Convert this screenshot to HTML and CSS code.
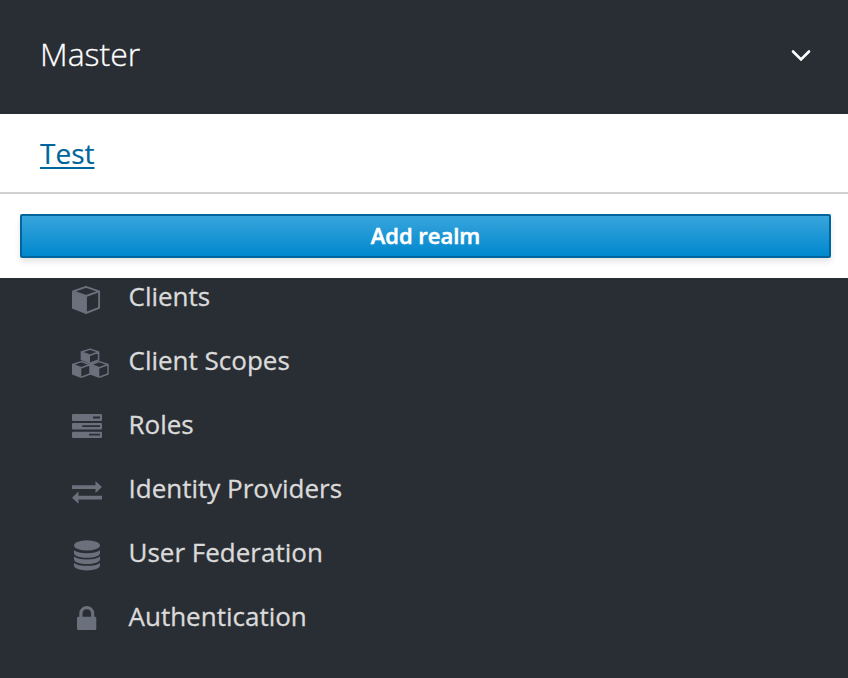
FILE: index.html
```
<!DOCTYPE html>
<html lang="en">
<head>
<meta charset="utf-8">
<title>Realm menu</title>
<link rel="stylesheet" href="styles.css">
</head>
<body>
<header class="realm">
  <h2 class="realm-name">Master</h2>
  <svg class="chevron" width="20" height="14" viewBox="0 0 20 14"><path d="M2 2.5 10 10.5 18 2.5"/></svg>
</header>
<section class="dropdown">
  <div class="realm-option"><a href="#">Test</a></div>
  <div class="add-realm"><button type="button">Add realm</button></div>
</section>
<nav>
  <ul class="menu">
    <li><svg class="icon" viewBox="0 0 40 40"><path d="M2 12.8 16 17.5V35L2 29.5Z"/><path class="line" d="M16 7.8 3 12.4 16 17 29.1 12.4ZM16 17 29.1 12.4V28.8L16 34Z"/></svg><span>Clients</span></li>
    <li><svg class="icon" viewBox="0 0 40 40"><path d="M10.7 9 20 12.3V20.7L10.7 17ZM2 21.6 11.3 25V35L2 31.4ZM20 21.6 29.3 25V35L20 31.4Z"/><path class="line thin" d="M20 6.1 11.4 9 20 12.2 28.6 9ZM20 12.2 28.6 9V17L20 20.3M11.3 18.6 2.7 21.5 11.3 24.7 20 21.5ZM11.3 24.7 20 21.5V31L11.3 34.3M29.3 18.6 20.7 21.5 29.3 24.7 38 21.5ZM29.3 24.7 38 21.5V31L29.3 34.3"/></svg><span>Client Scopes</span></li>
    <li><svg class="icon" viewBox="0 0 40 40"><path fill-rule="evenodd" d="M3 7H31Q32 7 32 8V13Q32 14 31 14H3Q2 14 2 13V8Q2 7 3 7ZM23 9.6V11.4H30V9.6ZM3 16H31Q32 16 32 17V21.4Q32 22.4 31 22.4H3Q2 22.4 2 21.4V17Q2 16 3 16ZM12.3 18.3V20.1H30V18.3ZM3 24.7H31Q32 24.7 32 25.7V30Q32 31 31 31H3Q2 31 2 30V25.7Q2 24.7 3 24.7ZM19 26.8V28.6H30V26.8Z"/></svg><span>Roles</span></li>
    <li><svg class="icon" viewBox="0 0 40 40"><path d="M2 14.2H25.5V10L32 16 25.5 22V18H2ZM32 24.8H8.5V20.6L2 26.7 8.5 32.8V28.6H32Z"/></svg><span>Identity Providers</span></li>
    <li><svg class="icon" viewBox="0 0 40 40"><ellipse cx="17" cy="10.4" rx="13" ry="5.2"/><path d="M4 15.3C6.5 17.3 11 18.2 17 18.2S27.5 17.3 30 15.3V18C30 20.7 24.2 22.8 17 22.8S4 20.7 4 18ZM4 21.6C6.5 23.6 11 24.5 17 24.5S27.5 23.6 30 21.6V24.3C30 27 24.2 29.1 17 29.1S4 27 4 24.3ZM4 27.9C6.5 29.9 11 30.8 17 30.8S27.5 29.9 30 27.9V30.6C30 33.3 24.2 35.4 17 35.4S4 33.3 4 30.6Z"/></svg><span>User Federation</span></li>
    <li><svg class="icon" viewBox="0 0 40 40"><rect x="7" y="17.7" width="19.3" height="13.3" rx="1.3"/><path class="line shackle" d="M10.9 18.5V14.8C10.9 6.6 22.7 6.6 22.7 14.8V18.5"/></svg><span>Authentication</span></li>
  </ul>
</nav>
</body>
</html>
```
FILE: styles.css
```
* { box-sizing: border-box; }
body {
  margin: 0;
  height: 678px;
  overflow: hidden;
  background: #292e34;
  font-family: "Open Sans", sans-serif;
}
.realm {
  display: flex;
  align-items: center;
  justify-content: space-between;
  height: 114px;
  padding: 0 37px 6px 40px;
  color: #fff;
}
.realm-name {
  margin: 0;
  font-size: 32px;
  font-weight: 300;
  line-height: 44px;
  -webkit-text-stroke: .3px;
}
.chevron {
  fill: none;
  stroke: #fff;
  stroke-width: 2.6;
  stroke-linecap: round;
  margin-top: 3px;
}
.dropdown { height: 164px; background: #fff; }
.realm-option {
  height: 80px;
  padding: 19px 40px;
  border-bottom: 2px solid #d1d1d1;
  font-size: 28px;
  line-height: 40px;
}
.realm-option a {
  color: #00659c;
  text-decoration: underline;
  text-decoration-thickness: 2px;
  text-underline-offset: 3px;
  -webkit-text-stroke: .2px;
}
.add-realm { padding: 20px 17px 20px 20px; }
.add-realm button {
  display: block;
  width: 100%;
  height: 44px;
  padding: 0 0 2px;
  border: 2px solid #00659c;
  border-radius: 2px;
  background: linear-gradient(#39a5dc, #0088ce);
  box-shadow: 0 4px 6px rgba(3, 3, 3, .1);
  color: #fff;
  font: 600 22px/38px "Open Sans", sans-serif;
  -webkit-text-stroke: .5px;
}
.menu { margin: -13px 0 0; padding: 0; list-style: none; }
.menu li {
  display: flex;
  align-items: center;
  gap: 18.5px;
  height: 64px;
  padding-left: 70px;
  color: #dbdada;
  font-size: 26px;
  line-height: 36px;
}
.menu span {
  padding-bottom: 2px;
  -webkit-text-stroke: .3px;
}
.icon { width: 40px; height: 40px; margin-top: 4px; fill: #6a707c; }
.line { fill: none; stroke: #6a707c; stroke-width: 1.9; stroke-linejoin: round; }
.thin { stroke-width: 1.5; }
.shackle { stroke-width: 3.2; }
```
